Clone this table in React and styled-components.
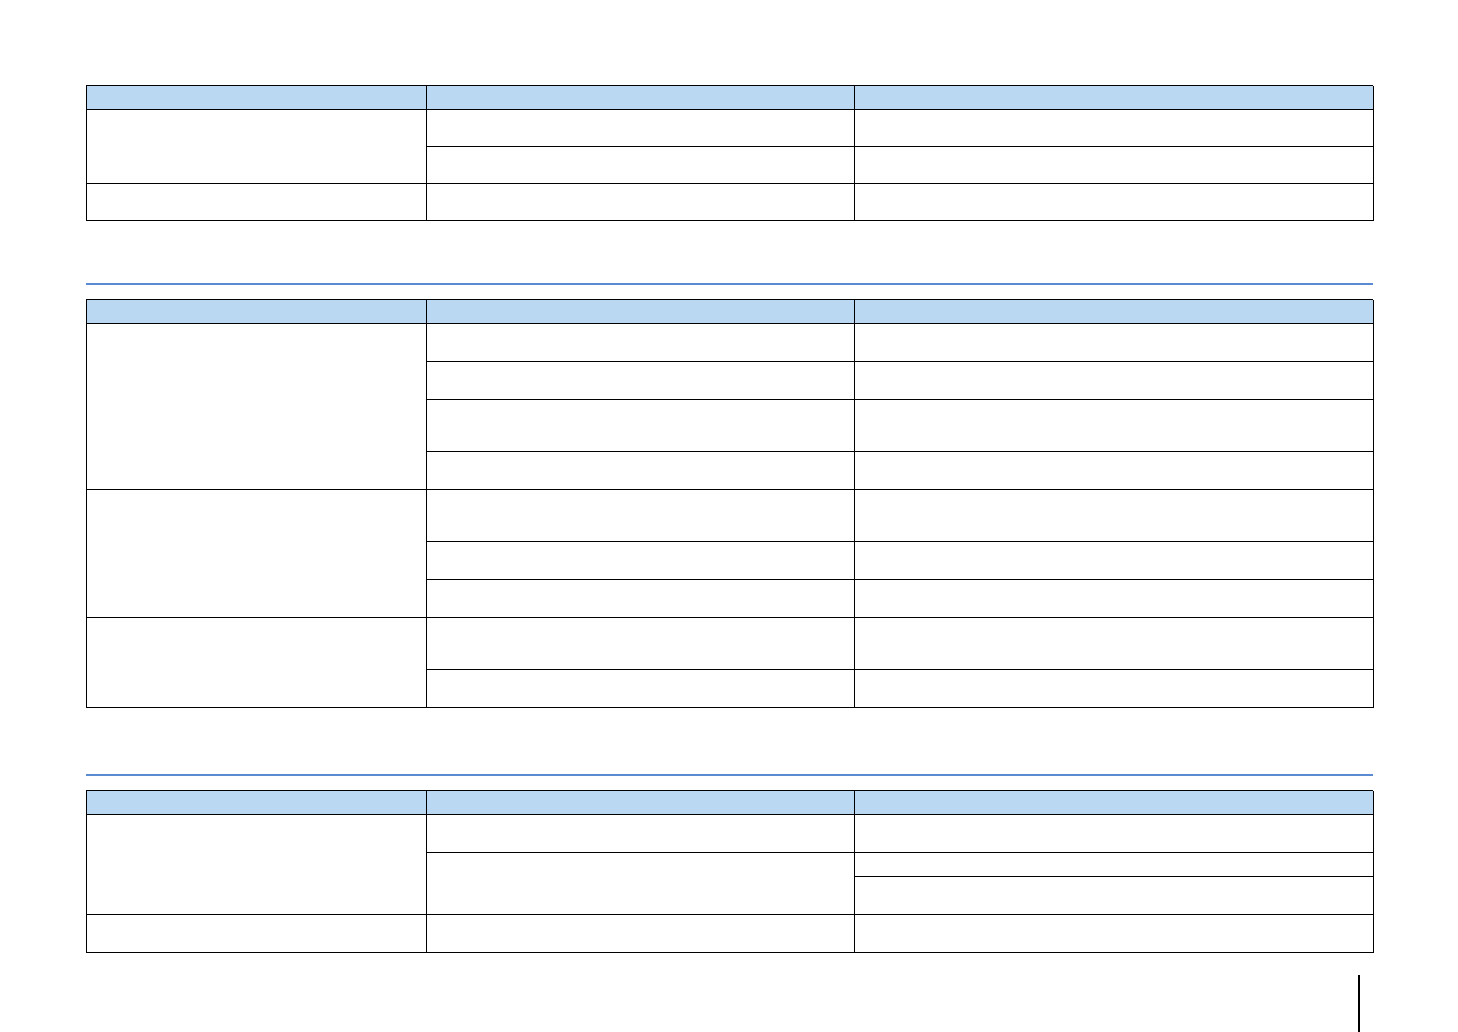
import styled, { createGlobalStyle } from 'styled-components';

const GlobalStyle = createGlobalStyle`
  html, body {
    margin: 0;
    padding: 0;
    background: #ffffff;
    font-family: "Liberation Sans", Arial, sans-serif;
    overflow: hidden;
  }
`;

const Page = styled.div`
  width: 1458px;
  height: 1032px;
  box-sizing: border-box;
  padding: 85px 0 0 86px;
  display: flex;
  flex-direction: column;
`;

const Section = styled.section`
  width: 1287px;
  display: flex;
  flex-direction: column;
  margin-top: ${(p) => p.$gap || 0}px;
`;

const Rule = styled.div`
  height: 2px;
  background: #5a8ad2;
  margin-bottom: 14px;
`;

const Grid = styled.div`
  display: grid;
  grid-template-columns: 340px 428px 519px;
  grid-template-rows: ${(p) => p.$rows.map((h) => h + 'px').join(' ')};
  border-left: 1px solid #000;
  border-top: 1px solid #000;
`;

const Cell = styled.div`
  box-sizing: border-box;
  border-right: 1px solid #000;
  border-bottom: 1px solid #000;
  background: ${(p) => (p.$head ? '#bbd8f3' : '#ffffff')};
  grid-column: ${(p) => p.$col};
  grid-row: ${(p) => p.$row} / span ${(p) => p.$span};
`;

const Footer = styled.div`
  width: 1287px;
  flex: 1;
  margin-top: 22px;
  display: flex;
  justify-content: flex-end;
  padding-right: 13px;
  box-sizing: border-box;
`;

const PageMark = styled.div`
  width: 2px;
  background: #000;
`;

const tables = [
  {
    rows: [24, 37, 37, 37],
    cols: [[2, 1], [1, 1, 1], [1, 1, 1]],
  },
  {
    rows: [24, 38, 38, 52, 38, 52, 38, 38, 52, 38],
    cols: [[4, 3, 2], [1, 1, 1, 1, 1, 1, 1, 1, 1], [1, 1, 1, 1, 1, 1, 1, 1, 1]],
  },
  {
    rows: [24, 38, 24, 38, 38],
    cols: [[3, 1], [1, 2, 1], [1, 1, 1, 1]],
  },
];

function Table({ rows, cols }) {
  const cells = [];
  cols.forEach((spans, c) => {
    cells.push(<Cell key={`h${c}`} $head $col={c + 1} $row={1} $span={1} />);
    let r = 2;
    spans.forEach((s, i) => {
      cells.push(<Cell key={`${c}-${i}`} $col={c + 1} $row={r} $span={s} />);
      r += s;
    });
  });
  return <Grid $rows={rows}>{cells}</Grid>;
}

function App() {
  return (
    <>
      <GlobalStyle />
      <Page>
        <Section>
          <Table {...tables[0]} />
        </Section>
        <Section $gap={62}>
          <Rule />
          <Table {...tables[1]} />
        </Section>
        <Section $gap={66}>
          <Rule />
          <Table {...tables[2]} />
        </Section>
        <Footer>
          <PageMark />
        </Footer>
      </Page>
    </>
  );
}

export default App;
